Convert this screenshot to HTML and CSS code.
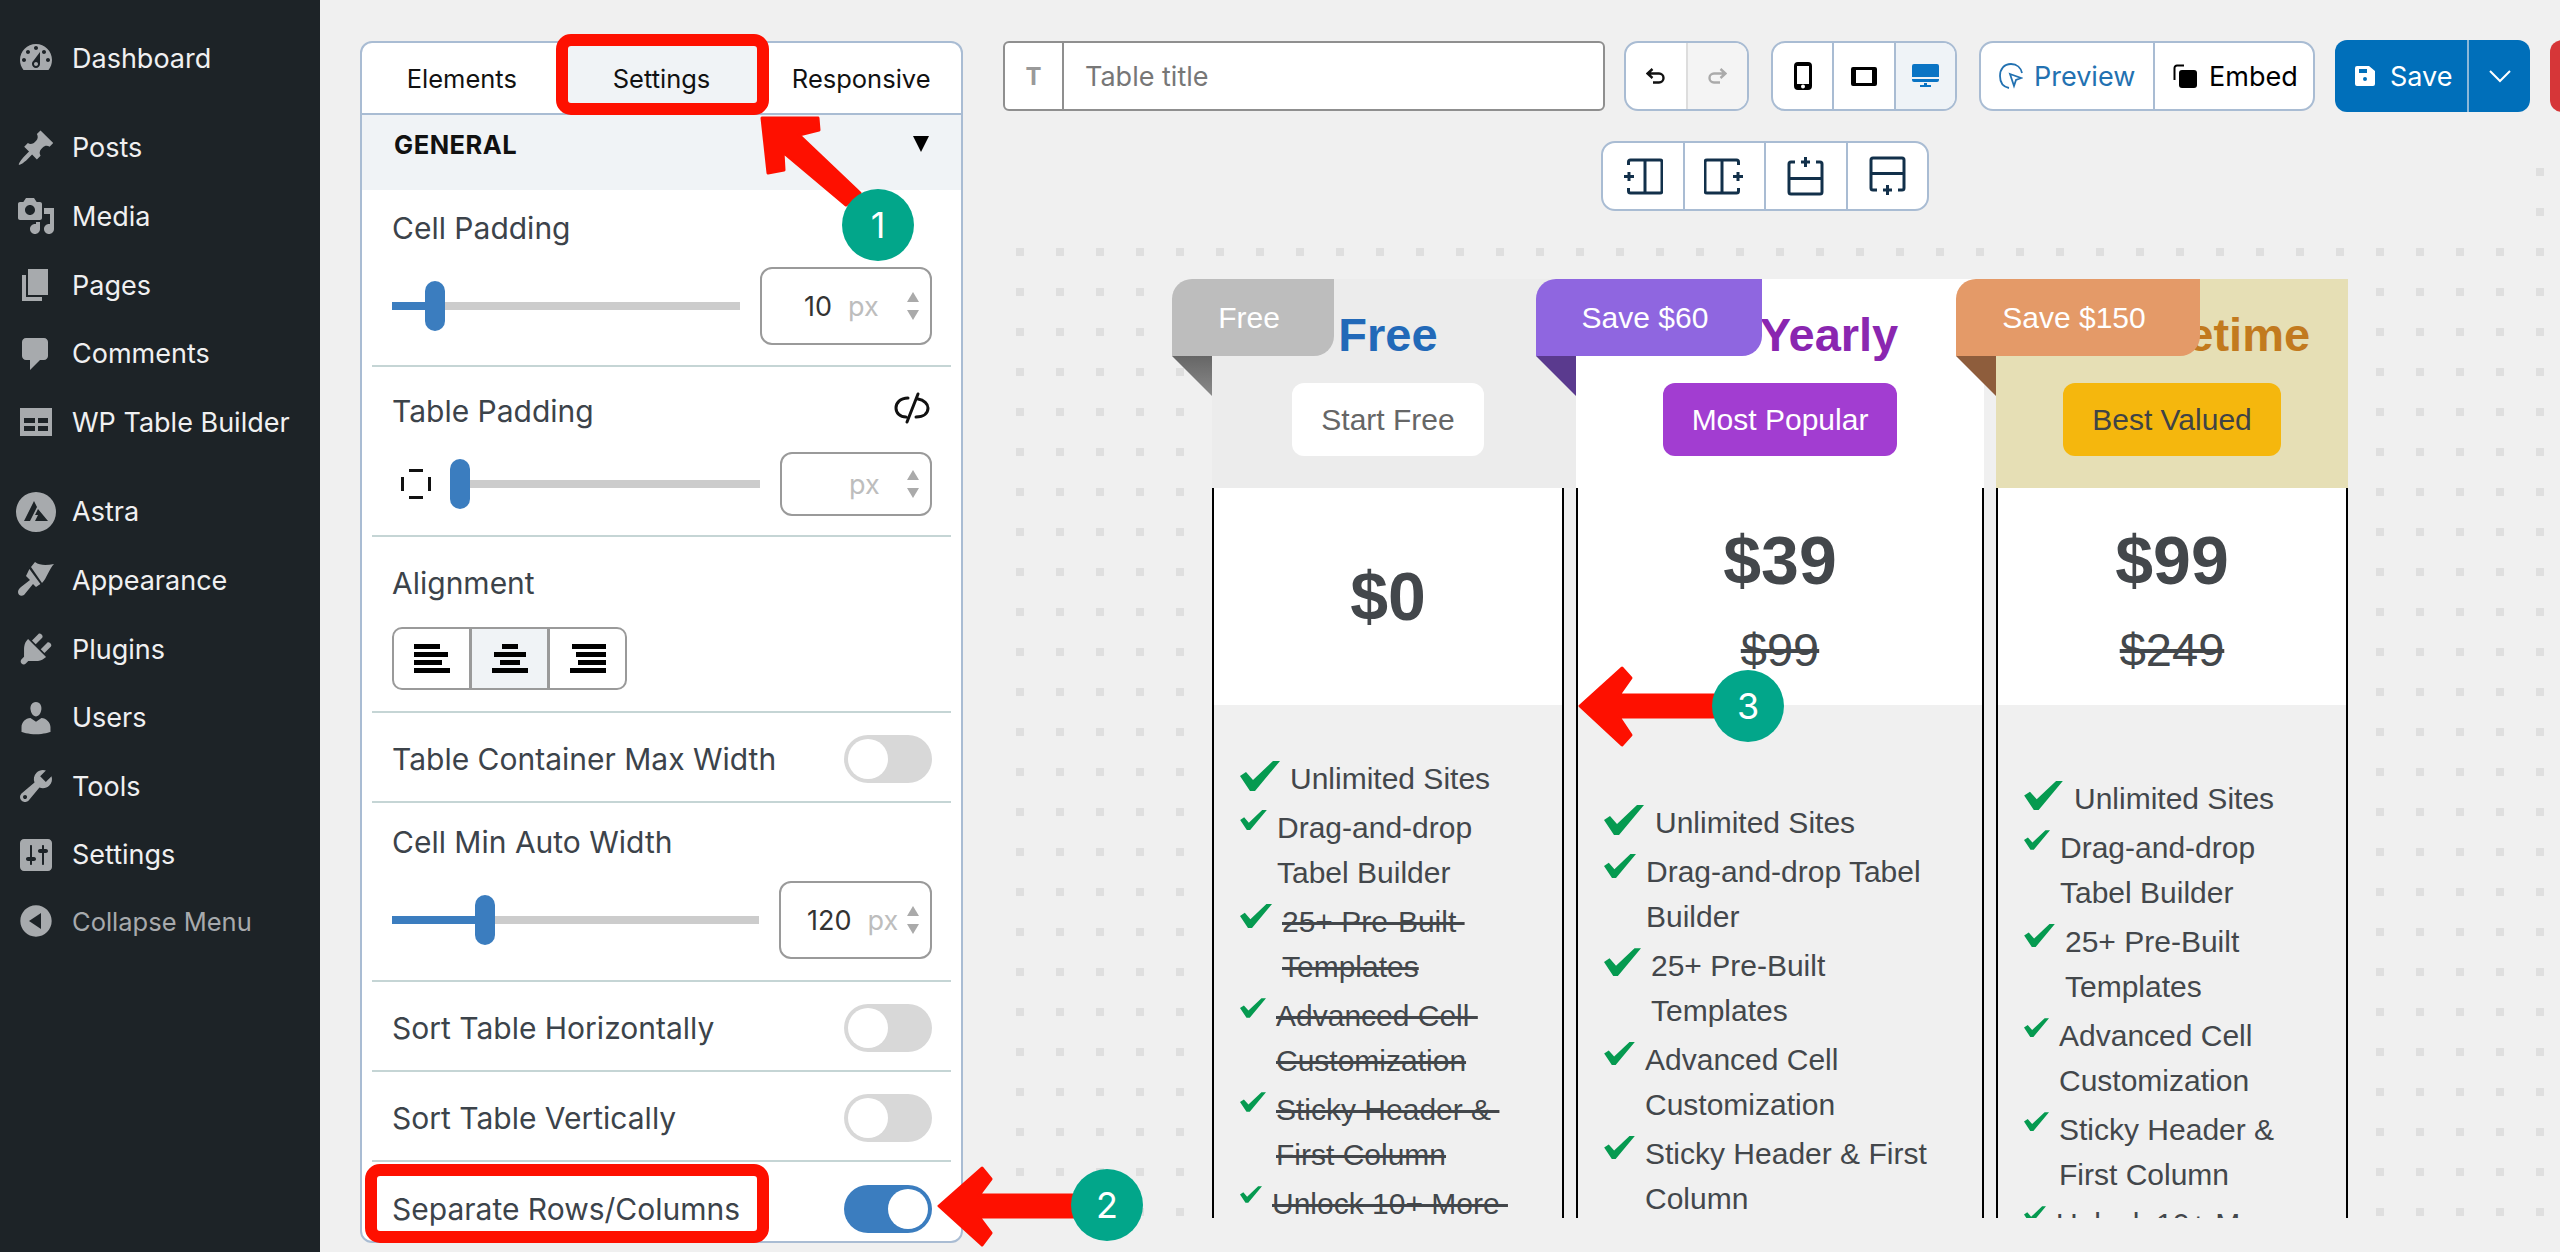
FILE: index.html
```html
<!DOCTYPE html>
<html lang="en">
<head>
    <meta charset="UTF-8">
    <title>WP Table Builder</title>
    <link rel="stylesheet" href="styles.css">
</head>
<body>
    <aside class="sidebar">
        <ul class="menu">
            <li class="menu-item menu-gap"><svg class="menu-icon" viewBox="0 0 20 20"><path fill-rule="evenodd" d="M3.76 16h12.48c1.1-1.37 1.76-3.11 1.76-5 0-4.42-3.58-8-8-8s-8 3.58-8 8c0 1.89.66 3.63 1.76 5zM10 4c.55 0 1 .45 1 1s-.45 1-1 1-1-.45-1-1 .45-1 1-1zM6 6c.55 0 1 .45 1 1s-.45 1-1 1-1-.45-1-1 .45-1 1-1zm8 0c.55 0 1 .45 1 1s-.45 1-1 1-1-.45-1-1 .45-1 1-1zm-5.37 5.550L12 7v6c0 1.100-.9 2-2 2s-2-.9-2-2c0-.57.24-1.080.63-1.450zM4 10c.55 0 1 .45 1 1s-.45 1-1 1-1-.45-1-1 .45-1 1-1zm12 0c.55 0 1 .45 1 1s-.45 1-1 1-1-.45-1-1 .45-1 1-1zm-5 3c0-.55-.45-1-1-1s-1 .45-1 1 .45 1 1 1 1-.45 1-1z"/></svg>Dashboard</li>
            <li class="menu-item"><svg class="menu-icon" viewBox="0 0 20 20"><path d="M10.440 3.020l1.820-1.820 6.360 6.350-1.830 1.820c-1.050-.68-2.480-.57-3.410.36l-.75.75c-.92.93-1.040 2.350-.35 3.410l-1.830 1.820-2.410-2.410-2.800 2.790c-.42.42-3.380 2.710-3.800 2.290s1.860-3.390 2.280-3.810l2.790-2.790L4.100 9.360l1.830-1.820c1.050.69 2.480.57 3.400-.36l.75-.75c.93-.92 1.050-2.350.36-3.410z"/></svg>Posts</li>
            <li class="menu-item"><svg class="menu-icon" viewBox="0 0 20 20"><path fill-rule="evenodd" d="M13 11V4c0-.55-.45-1-1-1h-1.670L9 1H5L3.670 3H2c-.55 0-1 .45-1 1v7c0 .55.45 1 1 1h10c.55 0 1-.45 1-1zM7 4.500c1.380 0 2.500 1.120 2.500 2.500S8.380 9.500 7 9.500 4.500 8.380 4.500 7 5.620 4.500 7 4.500zM14 6h5v10.500c0 1.380-1.120 2.500-2.500 2.500S14 17.880 14 16.500s1.120-2.500 2.500-2.500c.17 0 .34.02.5.05V9h-3V6zm-4 8.050V13h2v3.500c0 1.380-1.120 2.500-2.500 2.500S7 17.880 7 16.500 8.120 14 9.500 14c.17 0 .34.02.5.05z"/></svg>Media</li>
            <li class="menu-item"><svg class="menu-icon" viewBox="0 0 20 20"><path d="M6 15V2h10v13H6zm-1 1h8v2H3V5h2v11z"/></svg>Pages</li>
            <li class="menu-item"><svg class="menu-icon" viewBox="0 0 20 20"><path d="M5 2h9c1.100 0 2 .9 2 2v7c0 1.100-.9 2-2 2h-2l-5 5v-5H5c-1.100 0-2-.9-2-2V4c0-1.100.9-2 2-2z"/></svg>Comments</li>
            <li class="menu-item menu-gap"><svg class="menu-icon" viewBox="0 0 40 40"><path fill-rule="evenodd" d="M4 6h32v28H4zM8 16v5h11v-5zM22 16v5h10v-5zM8 24v5h11v-5zM22 24v5h10v-5z"/></svg>WP Table Builder</li>
            <li class="menu-item"><svg class="menu-icon" viewBox="0 0 40 40"><path fill-rule="evenodd" d="M20 0a20 20 0 1 1 0 40a20 20 0 0 1 0-40zM18 9L8 29h6l7-14zM22 17l-3 6h3l-3 6h13z"/></svg>Astra</li>
            <li class="menu-item"><svg class="menu-icon" viewBox="0 0 20 20"><path d="M7.500 3.500L9.500 1C12 2.800 15 2.800 19 2c-2.500 2.500-3.500 7-6 9.500zM6.700 4.500l5.500 7.500-2.200 1.500L8.500 12 4 17.500c-1.500 1-3 0-3-1.500 0-1 .5-1.500 1.500-2.500L7 10 5 8z"/></svg>Appearance</li>
            <li class="menu-item"><svg class="menu-icon" viewBox="0 0 20 20"><path d="M13.110 4.360L9.870 7.600 8 5.730l3.240-3.240c.35-.34 1.050-.2 1.560.32.52.51.66 1.210.31 1.550zm-8 1.770l.91-1.120 9.010 9.010-1.190.84c-.71.71-2.630 1.160-3.820 1.160H6.140L4.900 17.260c-.59.59-1.540.59-2.120 0-.59-.58-.59-1.530 0-2.120l1.240-1.240v-3.880c0-1.130.4-3.190 1.090-3.890zm7.260 3.970l3.240-3.240c.34-.35 1.040-.21 1.550.31.52.51.66 1.210.31 1.550l-3.240 3.250z"/></svg>Plugins</li>
            <li class="menu-item"><svg class="menu-icon" viewBox="0 0 20 20"><path d="M10 9.250c-2.270 0-2.730-3.440-2.730-3.440C7 4.020 7.820 2 9.970 2c2.160 0 2.980 2.020 2.710 3.810 0 0-.41 3.440-2.680 3.440zm0 2.570L12.720 10c2.390 0 4.520 2.330 4.520 4.530v2.490s-3.650 1.130-7.240 1.130c-3.650 0-7.240-1.130-7.240-1.130v-2.490c0-2.250 1.940-4.480 4.470-4.480z"/></svg>Users</li>
            <li class="menu-item"><svg class="menu-icon" viewBox="0 0 20 20"><path fill-rule="evenodd" d="M16.680 9.770c-1.340 1.340-3.300 1.670-4.950.99l-5.410 6.520c-.99.99-2.590.99-3.580 0s-.99-2.590 0-3.570l6.520-5.420c-.68-1.650-.35-3.610.99-4.950 1.280-1.280 3.120-1.620 4.720-1.060l-2.890 2.890 2.820 2.820 2.860-2.870c.53 1.580.18 3.390-1.080 4.650zM3.810 16.210c.4.39 1.040.39 1.430 0 .4-.4.4-1.040 0-1.430-.39-.4-1.030-.4-1.430 0-.39.39-.39 1.030 0 1.430z"/></svg>Tools</li>
            <li class="menu-item"><svg class="menu-icon" viewBox="0 0 20 20"><path fill-rule="evenodd" d="M18 16V4c0-1.100-.9-2-2-2H4c-1.100 0-2 .9-2 2v12c0 1.100.9 2 2 2h12c1.100 0 2-.9 2-2zM8 11h1c.55 0 1 .45 1 1s-.45 1-1 1H8v1.500c0 .28-.22.5-.5.5s-.5-.22-.5-.5V13H6c-.55 0-1-.45-1-1s.45-1 1-1h1V5.500c0-.28.22-.5.5-.5s.5.22.5.5V11zm5-2h-1c-.55 0-1-.45-1-1s.45-1 1-1h1V5.500c0-.28.22-.5.5-.5s.5.22.5.5V7h1c.55 0 1 .45 1 1s-.45 1-1 1h-1v5.500c0 .28-.22.5-.5.5s-.5-.22-.5-.5V9z"/></svg>Settings</li>
            <li class="menu-item menu-collapse"><svg class="menu-icon" viewBox="0 0 20 20"><path fill-rule="evenodd" d="M10 2.160c4.330 0 7.840 3.510 7.840 7.840s-3.510 7.840-7.840 7.840S2.160 14.330 2.160 10 5.670 2.160 10 2.160zM12.500 14V6l-6 4z"/></svg>Collapse Menu</li>
        </ul>
    </aside>

    <main class="main">
        <section class="panel">
            <div class="tabs">
                <div class="tab">Elements</div>
                <div class="tab tab-active">Settings</div>
                <div class="tab">Responsive</div>
            </div>
            <div class="group-head">
                <span>GENERAL</span>
                <svg width="18" height="16" viewBox="0 0 18 16"><polygon points="1,0 17,0 9,16"/></svg>
            </div>

            <div class="setting setting-cell">
                <div class="label">Cell Padding</div>
                <div class="slider-row">
                    <div class="track"><div class="fill" style="width: 33px"></div><div class="handle"></div><div class="rest"></div></div>
                    <div class="num num-big"><span class="num-value">10</span><span class="unit">px</span><span class="spin"><i class="up"></i><i class="down"></i></span></div>
                </div>
            </div>

            <div class="setting setting-table">
                <div class="label-row">
                    <div class="label">Table Padding</div>
                    <svg width="36" height="32" viewBox="0 0 36 32" fill="none" stroke="#111" stroke-width="3" stroke-linecap="round"><path d="M14 6C6 6 2 11 2 16c0 5 4 9 10 9M24 7c6 1 10 5 10 9 0 5-4 9-12 9M24 2L13 30"/></svg>
                </div>
                <div class="slider-row">
                    <svg class="padding-icon" width="30" height="30" viewBox="0 0 30 30" stroke="#111" stroke-width="3"><path d="M8 1.500H22M8 28.500H22M1.500 8V22M28.500 8V22"/></svg>
                    <div class="track"><div class="handle"></div><div class="rest"></div></div>
                    <div class="num num-short"><span class="unit">px</span><span class="spin"><i class="up"></i><i class="down"></i></span></div>
                </div>
            </div>

            <div class="setting setting-align">
                <div class="label">Alignment</div>
                <div class="align-group">
                    <div class="align-btn"><svg width="36" height="30" viewBox="0 0 36 30"><path d="M0 0h26v5H0zM0 8h34v5H0zM0 16h28v5H0zM0 24h36v5H0z"/></svg></div>
                    <div class="align-btn align-on"><svg width="36" height="30" viewBox="0 0 36 30"><path d="M10 0h16v5H10zM2 8h32v5H2zM8 16h20v5H8zM0 24h36v5H0z"/></svg></div>
                    <div class="align-btn"><svg width="36" height="30" viewBox="0 0 36 30"><path d="M2 0h34v5H2zM6 8h30v5H6zM8 16h28v5H8zM0 24h36v5H0z"/></svg></div>
                </div>
            </div>

            <div class="setting setting-toggle">
                <div class="label">Table Container Max Width</div>
                <div class="toggle"><div class="knob"></div></div>
            </div>

            <div class="setting setting-min">
                <div class="label">Cell Min Auto Width</div>
                <div class="slider-row">
                    <div class="track"><div class="fill" style="width: 83px"></div><div class="handle handle-short"></div><div class="rest"></div></div>
                    <div class="num num-mid"><span class="num-value">120</span><span class="unit">px</span><span class="spin"><i class="up"></i><i class="down"></i></span></div>
                </div>
            </div>

            <div class="setting setting-toggle">
                <div class="label">Sort Table Horizontally</div>
                <div class="toggle"><div class="knob"></div></div>
            </div>

            <div class="setting setting-toggle">
                <div class="label">Sort Table Vertically</div>
                <div class="toggle"><div class="knob"></div></div>
            </div>

            <div class="setting setting-toggle setting-last">
                <div class="label">Separate Rows/Columns</div>
                <div class="toggle toggle-on"><div class="knob"></div></div>
            </div>
        </section>

        <section class="workspace">
            <div class="toolbar">
                <div class="title-field">
                    <span class="title-t">T</span>
                    <span class="title-text">Table title</span>
                </div>
                <div class="btn-group group-undo">
                    <div class="tool tool-undo"><svg width="20" height="16" viewBox="0 0 20 16" fill="none" stroke="#111" stroke-width="2.400"><path d="M6.500 1L1.500 5.500l5 4.500M1.500 5.500H13a4.500 4.500 0 0 1 0 9H7"/></svg></div>
                    <div class="tool tool-redo"><svg width="20" height="16" viewBox="0 0 20 16" fill="none" stroke="#aaa" stroke-width="2.400"><path d="M13.500 1l5 4.500-5 4.500M18.500 5.500H7a4.500 4.500 0 0 0 0 9h6"/></svg></div>
                </div>
                <div class="btn-group group-device">
                    <div class="tool"><svg width="18" height="28" viewBox="0 0 18 28"><path fill-rule="evenodd" d="M4 0h10a4 4 0 0 1 4 4v20a4 4 0 0 1-4 4H4a4 4 0 0 1-4-4V4a4 4 0 0 1 4-4zM3 4v18h12V4zM7 24.500a2 2 0 1 0 4 0a2 2 0 1 0-4 0z"/></svg></div>
                    <div class="tool"><svg width="26" height="19" viewBox="0 0 26 19"><path fill-rule="evenodd" d="M2 0h22a2 2 0 0 1 2 2v15a2 2 0 0 1-2 2H2a2 2 0 0 1-2-2V2a2 2 0 0 1 2-2zM5 3v13h16V3z"/></svg></div>
                    <div class="tool tool-on"><svg width="27" height="24" viewBox="0 0 27 24" fill="#0a74c4"><path d="M2 0h23a2 2 0 0 1 2 2v11H0V2a2 2 0 0 1 2-2zM0 15h27v1a2 2 0 0 1-2 2H2a2 2 0 0 1-2-2zM12 19h3v2h4v2H8v-2h4z"/></svg></div>
                </div>
                <div class="btn-group group-share">
                    <div class="share share-preview">
                        <svg width="24" height="26" viewBox="0 0 24 26" fill="none" stroke="#2271b1" stroke-width="1.800"><path d="M10 25C5 24 1 20 1 13 1 6 5 1 12 1c6 0 10 4 11 9"/><path d="M11 11l11 4-5 2-2 6z"/></svg>
                        Preview
                    </div>
                    <div class="share share-embed">
                        <svg width="24" height="24" viewBox="0 0 24 24"><path fill="none" stroke="#000" stroke-width="2" d="M11 1.500H4A2.500 2.500 0 0 0 1.500 4v12"/><rect x="6" y="6" width="18" height="18" rx="3"/></svg>
                        Embed
                    </div>
                </div>
                <div class="save-btn">
                    <div class="save-main">
                        <svg width="20" height="20" viewBox="0 0 20 20" fill="#fff"><path fill-rule="evenodd" d="M2 0h12l6 5v13a2 2 0 0 1-2 2H2a2 2 0 0 1-2-2V2a2 2 0 0 1 2-2zM4 3v4h8V3zM8 13a2 2 0 1 0 4 0a2 2 0 1 0-4 0z"/></svg>
                        Save
                    </div>
                    <div class="save-more"><svg width="22" height="13" viewBox="0 0 22 13" fill="none" stroke="#fff" stroke-width="2"><path d="M1 1l10 10L21 1"/></svg></div>
                </div>
                <div class="red-btn"></div>
            </div>

            <div class="btn-group add-group">
                <div class="tool"><svg width="40" height="37" viewBox="0 0 40 37" fill="none"><path d="M5.500 7V4a2 2 0 0 1 2-2H37a2 2 0 0 1 2 2v29a2 2 0 0 1-2 2H7.500a2 2 0 0 1-2-2v-3M22 2v33M1 18.500h10M6 14v9"/></svg></div>
                <div class="tool"><svg class="flip-x" width="40" height="37" viewBox="0 0 40 37" fill="none"><path d="M5.500 7V4a2 2 0 0 1 2-2H37a2 2 0 0 1 2 2v29a2 2 0 0 1-2 2H7.500a2 2 0 0 1-2-2v-3M22 2v33M1 18.500h10M6 14v9"/></svg></div>
                <div class="tool"><svg width="37" height="40" viewBox="0 0 37 40" fill="none"><path d="M8 6H4a2 2 0 0 0-2 2v28a2 2 0 0 0 2 2h29a2 2 0 0 0 2-2V8a2 2 0 0 0-2-2h-4M2 22.500h33M18.500 1v10M14 6h9"/></svg></div>
                <div class="tool"><svg class="flip-y" width="37" height="40" viewBox="0 0 37 40" fill="none"><path d="M8 6H4a2 2 0 0 0-2 2v28a2 2 0 0 0 2 2h29a2 2 0 0 0 2-2V8a2 2 0 0 0-2-2h-4M2 22.500h33M18.500 1v10M14 6h9"/></svg></div>
            </div>

            <div class="canvas">
                <div class="price-table">

                    <div class="col col-free">
                        <div class="ribbon">Free</div>
                        <div class="fold"></div>
                        <div class="col-head">
                            <div class="plan-title">Free</div>
                            <div class="plan-btn">Start Free</div>
                        </div>
                        <div class="col-body">
                            <div class="price"><div class="price-main">$0</div></div>
                            <ul class="features">
                                <li><svg class="check" width="40" height="30" viewBox="0 0 40 30"><path d="M0 15l6-4 7 8L33 0h7L15 30h-5z"/></svg><span>Unlimited Sites</span></li>
                                <li><svg class="check" width="27" height="20" viewBox="0 0 40 30"><path d="M0 15l6-4 7 8L33 0h7L15 30h-5z"/></svg><span>Drag-and-drop<br>Tabel Builder</span></li>
                                <li><svg class="check" width="32" height="24" viewBox="0 0 40 30"><path d="M0 15l6-4 7 8L33 0h7L15 30h-5z"/></svg><s>25+ Pre-Built&nbsp;<br>Templates</s></li>
                                <li><svg class="check" width="26" height="20" viewBox="0 0 40 30"><path d="M0 15l6-4 7 8L33 0h7L15 30h-5z"/></svg><s>Advanced Cell&nbsp;<br>Customization</s></li>
                                <li><svg class="check" width="26" height="20" viewBox="0 0 40 30"><path d="M0 15l6-4 7 8L33 0h7L15 30h-5z"/></svg><s>Sticky Header &amp;&nbsp;<br>First Column</s></li>
                                <li><svg class="check" width="22" height="17" viewBox="0 0 40 30"><path d="M0 15l6-4 7 8L33 0h7L15 30h-5z"/></svg><s>Unlock 10+ More&nbsp;</s></li>
                            </ul>
                        </div>
                    </div>

                    <div class="col col-year">
                        <div class="ribbon">Save $60</div>
                        <div class="fold"></div>
                        <div class="col-head">
                            <div class="plan-title">Yearly</div>
                            <div class="plan-btn">Most Popular</div>
                        </div>
                        <div class="col-body">
                            <div class="price"><div class="price-main">$39</div><div class="price-old">$99</div></div>
                            <ul class="features">
                                <li><svg class="check" width="40" height="30" viewBox="0 0 40 30"><path d="M0 15l6-4 7 8L33 0h7L15 30h-5z"/></svg><span class="gap-11">Unlimited Sites</span></li>
                                <li><svg class="check" width="32" height="24" viewBox="0 0 40 30"><path d="M0 15l6-4 7 8L33 0h7L15 30h-5z"/></svg><span>Drag-and-drop Tabel<br>Builder</span></li>
                                <li><svg class="check" width="37" height="28" viewBox="0 0 40 30"><path d="M0 15l6-4 7 8L33 0h7L15 30h-5z"/></svg><span>25+ Pre-Built<br>Templates</span></li>
                                <li><svg class="check" width="31" height="23" viewBox="0 0 40 30"><path d="M0 15l6-4 7 8L33 0h7L15 30h-5z"/></svg><span>Advanced Cell<br>Customization</span></li>
                                <li><svg class="check" width="31" height="23" viewBox="0 0 40 30"><path d="M0 15l6-4 7 8L33 0h7L15 30h-5z"/></svg><span>Sticky Header &amp; First<br>Column</span></li>
                            </ul>
                        </div>
                    </div>

                    <div class="col col-life">
                        <div class="ribbon">Save $150</div>
                        <div class="fold"></div>
                        <div class="col-head">
                            <div class="plan-title">Lifetime</div>
                            <div class="plan-btn">Best Valued</div>
                        </div>
                        <div class="col-body">
                            <div class="price"><div class="price-main">$99</div><div class="price-old">$249</div></div>
                            <ul class="features">
                                <li><svg class="check" width="39" height="29" viewBox="0 0 40 30"><path d="M0 15l6-4 7 8L33 0h7L15 30h-5z"/></svg><span class="gap-11">Unlimited Sites</span></li>
                                <li><svg class="check" width="26" height="20" viewBox="0 0 40 30"><path d="M0 15l6-4 7 8L33 0h7L15 30h-5z"/></svg><span>Drag-and-drop<br>Tabel Builder</span></li>
                                <li><svg class="check" width="31" height="23" viewBox="0 0 40 30"><path d="M0 15l6-4 7 8L33 0h7L15 30h-5z"/></svg><span>25+ Pre-Built<br>Templates</span></li>
                                <li><svg class="check" width="25" height="19" viewBox="0 0 40 30"><path d="M0 15l6-4 7 8L33 0h7L15 30h-5z"/></svg><span>Advanced Cell<br>Customization</span></li>
                                <li><svg class="check" width="25" height="19" viewBox="0 0 40 30"><path d="M0 15l6-4 7 8L33 0h7L15 30h-5z"/></svg><span>Sticky Header &amp;<br>First Column</span></li>
                                <li><svg class="check" width="22" height="17" viewBox="0 0 40 30"><path d="M0 15l6-4 7 8L33 0h7L15 30h-5z"/></svg><span>Unlock 10+ More</span></li>
                            </ul>
                        </div>
                    </div>

                </div>
            </div>
        </section>
    </main>

    <!-- red markup drawn over the screenshot -->
    <svg class="marks" width="2560" height="1252" viewBox="0 0 2560 1252">
        <rect class="mark-box" x="562" y="40" width="201" height="69" rx="9"/>
        <rect class="mark-box" x="371" y="1170" width="392" height="67" rx="9"/>
        <polygon class="mark-arrow" points="762,118 818,118 819,130 799,135 860,193 846,205 783,152 784,170 768,173"/>
        <polygon class="mark-arrow" points="939,1206 982,1168 991,1179 979,1195 1080,1195 1080,1217 979,1217 991,1233 982,1245"/>
        <polygon class="mark-arrow" points="1580,706 1622,668 1631,678 1619,695 1720,695 1720,717 1619,717 1631,735 1622,745"/>
    </svg>
    <div class="badge badge-one">1</div>
    <div class="badge badge-two">2</div>
    <div class="badge badge-three">3</div>
    <div class="stray-dots"></div>
</body>
</html>
```

FILE: styles.css
```css
* {
    box-sizing: border-box;
}

body {
    position: relative;
    display: flex;
    width: 2560px;
    height: 1252px;
    margin: 0;
    overflow: hidden;
    background-color: #f0f0f0;
    font-family: Inter, "Liberation Sans", sans-serif;
    color: #3c434a;
}

/* sidebar */

.sidebar {
    flex: 0 0 320px;
    padding-top: 24px;
    background-color: #1d2327;
}

.menu {
    margin: 0;
    padding: 0;
    list-style: none;
}

.menu-item {
    display: flex;
    align-items: center;
    height: 68.6px;
    padding-left: 16px;
    font-size: 27px;
    color: #f0f0f1;
}

.menu-gap {
    margin-bottom: 21px;
}

.menu-collapse {
    margin-top: -2px;
    color: #a7aaad;
    font-size: 25.5px;
}

.menu-icon {
    flex: none;
    width: 40px;
    height: 40px;
    margin-right: 16px;
    fill: #a7aaad;
}

/* main */

.main {
    display: flex;
    flex: 1;
    gap: 40px;
    padding: 41px 0 9px 40px;
}

.panel {
    flex: 0 0 603px;
    height: 1202px;
    overflow: hidden;
    background-color: #fff;
    border: 2px solid #a9bcd3;
    border-radius: 12px;
}

.tabs {
    display: flex;
    height: 72px;
    border-bottom: 2px solid #a9bcd3;
}

.tab {
    display: flex;
    flex: 1;
    align-items: center;
    justify-content: center;
    font-size: 25.5px;
    color: #111;
}

.tab-active {
    background-color: #f0f3f6;
}

.group-head {
    display: flex;
    align-items: flex-start;
    justify-content: space-between;
    height: 75px;
    padding: 14px 31px 0 32px;
    background-color: #f0f3f6;
    font-size: 25.5px;
    font-weight: 700;
    letter-spacing: 0.5px;
    color: #111;
}

.group-head svg {
    margin-top: 7px;
}

.setting {
    margin: 0 10px;
    padding: 0 19px 0 20px;
    border-bottom: 2px solid #c5d5d5;
}

.label {
    font-size: 30px;
    line-height: 38px;
}

.label-row {
    display: flex;
    align-items: flex-start;
    justify-content: space-between;
    padding-right: 2px;
}

.setting-cell {
    height: 177px;
    padding-top: 19px;
}

.setting-table {
    height: 170px;
    padding-top: 25px;
}

.setting-align {
    height: 176px;
    padding-top: 27px;
}

.setting-min {
    height: 179px;
    padding-top: 20px;
}

.setting-toggle {
    display: flex;
    align-items: center;
    justify-content: space-between;
    height: 90px;
    padding-top: 3px;
}

.setting-last {
    border-bottom: 0;
}

.setting-cell .slider-row,
.setting-min .slider-row {
    margin-top: 20px;
    height: 78px;
}

.setting-table .slider-row {
    margin-top: 22px;
    height: 64px;
}

.slider-row {
    display: flex;
    align-items: center;
    gap: 20px;
}

.padding-icon {
    flex: none;
    margin-left: 9px;
    margin-right: -1px;
}

.track {
    display: flex;
    flex: 1;
    align-items: center;
}

.fill {
    flex: none;
    height: 8px;
    background-color: #3b7dbf;
}

.rest {
    flex: 1;
    height: 8px;
    background-color: #cccccc;
}

.handle {
    flex: none;
    width: 20px;
    height: 50px;
    background-color: #3b7dbf;
    border-radius: 10px;
}

.num {
    display: flex;
    flex: none;
    align-items: center;
    height: 100%;
    padding-right: 11px;
    background-color: #fff;
    border: 2px solid #9a9a9a;
    border-radius: 12px;
    font-size: 27px;
    color: #333;
}

.num-big {
    width: 172px;
    padding-left: 42px;
}

.num-short {
    width: 152px;
    padding-left: 67px;
}

.num-mid {
    width: 153px;
    padding-left: 26px;
}

.num-value {
    margin-right: 16px;
}

.unit {
    color: #bdbdbd;
}

.spin {
    display: flex;
    flex-direction: column;
    gap: 8px;
    margin-left: auto;
}

.spin i {
    display: block;
    width: 0;
    height: 0;
    border-left: 6px solid transparent;
    border-right: 6px solid transparent;
}

.spin .up {
    border-bottom: 10px solid #aaa;
}

.spin .down {
    border-top: 10px solid #aaa;
}

.align-group {
    display: flex;
    width: 235px;
    height: 63px;
    margin-top: 25px;
    overflow: hidden;
    border: 2px solid #9a9a9a;
    border-radius: 10px;
}

.align-btn {
    display: flex;
    flex: 1;
    align-items: center;
    justify-content: center;
}

.align-on {
    background-color: #f0f3f6;
    border-left: 3px solid #9a9a9a;
    border-right: 3px solid #9a9a9a;
}

.toggle {
    display: flex;
    align-items: center;
    width: 88px;
    height: 48px;
    padding: 0 4px;
    background-color: #d8d8d8;
    border-radius: 24px;
}

.toggle-on {
    justify-content: flex-end;
    background-color: #3b7dbf;
}

.knob {
    width: 40px;
    height: 40px;
    background-color: #fff;
    border-radius: 50%;
}

/* toolbars */

.workspace {
    display: flex;
    flex: 1;
    flex-direction: column;
    min-width: 0;
}

.toolbar {
    display: flex;
    align-items: center;
    height: 70px;
}

.title-field {
    display: flex;
    flex: 0 0 602px;
    align-items: center;
    height: 70px;
    background-color: #fff;
    border: 2px solid #8f8f8f;
    border-radius: 6px;
}

.title-t {
    display: flex;
    flex: 0 0 59px;
    align-items: center;
    justify-content: center;
    height: 100%;
    border-right: 2px solid #8f8f8f;
    font-size: 24px;
    font-weight: 700;
    color: #999;
}

.title-text {
    padding-left: 21px;
    font-size: 27px;
    color: #777;
}

.btn-group {
    display: flex;
    flex: none;
    height: 70px;
    overflow: hidden;
    background-color: #fff;
    border: 2px solid #a9bcd3;
    border-radius: 14px;
}

.tool {
    display: flex;
    flex: 1;
    align-items: center;
    justify-content: center;
}

.tool + .tool {
    border-left: 2px solid #a9bcd3;
}

.group-undo {
    width: 125px;
    margin-left: 19px;
}

.tool-redo {
    background-color: #f4f4f4;
}

.group-undo .tool + .tool {
    border-left-color: #ddd;
}

.group-device {
    width: 186px;
    margin-left: 22px;
}

.tool-on {
    background-color: #eff3f7;
}

.group-share {
    width: 336px;
    margin-left: 22px;
}

.share {
    display: flex;
    align-items: center;
    font-size: 27px;
}

.share-preview {
    flex: 0 0 172px;
    gap: 11px;
    padding-left: 18px;
    color: #2271b1;
}

.share-embed {
    flex: 1;
    gap: 12px;
    padding-left: 18px;
    border-left: 2px solid #a9bcd3;
    color: #000;
}

.save-btn {
    display: flex;
    flex: 0 0 195px;
    height: 72px;
    margin-left: 20px;
    overflow: hidden;
    background-color: #006fba;
    border-radius: 12px;
    font-size: 27px;
    color: #fff;
}

.save-main {
    display: flex;
    flex: 0 0 134px;
    align-items: center;
    gap: 15px;
    padding-left: 20px;
    border-right: 2px solid #8db8d8;
}

.save-more {
    display: flex;
    flex: 1;
    align-items: center;
    justify-content: center;
}

.red-btn {
    flex: none;
    width: 40px;
    height: 72px;
    margin-left: 20px;
    background-color: #d63638;
    border-radius: 12px;
}

.add-group {
    align-self: flex-start;
    width: 328px;
    margin: 30px 0 0 598px;
}

.add-group svg {
    stroke: #12304a;
    stroke-width: 3;
}

.flip-x {
    transform: scaleX(-1);
}

.flip-y {
    transform: scaleY(-1);
}

/* pricing table on the dotted canvas */

.canvas {
    width: 1560px;
    height: 978px;
    margin: 29px 0 0 -3px;
    padding: 39px 0 0 212px;
    overflow: hidden;
    background-color: #f0f0f0;
    background-image: conic-gradient(from 0deg at 8px 8px, transparent 75%, #dfdfdf 0);
    background-position: 16px 8px;
    background-size: 40px 40px;
}

.price-table {
    display: grid;
    grid-template-columns: 352px 408px 352px;
    column-gap: 12px;
    width: 1136px;
    background-color: #f0f0f0;
    font-family: "Liberation Sans", Arial, sans-serif;
    color: #43474b;
}

.col {
    position: relative;
}

.col-head {
    display: flex;
    flex-direction: column;
    align-items: center;
    height: 209px;
    padding-top: 29px;
}

.col-free .col-head {
    margin-right: -12px;
    padding-right: 12px;
    background-color: #ececec;
}

.col-year .col-head {
    background-color: #fff;
}

.col-life .col-head {
    background-color: #e6dfb5;
}

.plan-title {
    font-size: 47px;
    font-weight: 700;
    line-height: 54px;
}

.col-free .plan-title {
    color: #2269b8;
}

.col-year .plan-title {
    padding-left: 98px;
    color: #8a26b0;
}

.col-life .plan-title {
    padding-left: 96px;
    color: #c27a1e;
}

.plan-btn {
    display: flex;
    align-items: center;
    height: 73px;
    margin-top: 21px;
    padding: 0 29px;
    border-radius: 12px;
    font-size: 30px;
}

.col-free .plan-btn {
    background-color: #fff;
    color: #666;
}

.col-year .plan-btn {
    background-color: #a23dd1;
    color: #fff;
}

.col-life .plan-btn {
    background-color: #f5b70d;
    color: #3f4346;
}

.ribbon {
    position: absolute;
    top: 0;
    left: -40px;
    z-index: 2;
    display: flex;
    align-items: center;
    justify-content: center;
    height: 77px;
    padding-right: 8px;
    border-radius: 20px 0 20px 0;
    font-size: 30px;
    color: #fff;
}

.fold {
    position: absolute;
    top: 77px;
    left: -40px;
    z-index: 2;
    width: 40px;
    height: 40px;
    clip-path: polygon(0 0, 100% 0, 100% 100%);
}

.col-free .ribbon {
    width: 162px;
    background-color: #bdbdbd;
}

.col-free .fold {
    background: linear-gradient(#666, #8a8a8a);
}

.col-year .ribbon {
    width: 226px;
    background-color: #8f66e0;
}

.col-year .fold {
    background-color: #5a3a8e;
}

.col-life .ribbon {
    width: 244px;
    background-color: #e49a68;
}

.col-life .fold {
    background-color: #8e5d3c;
}

.col-body {
    height: 730px;
    border-left: 2px solid #000;
    border-right: 2px solid #000;
}

.price {
    display: flex;
    flex-direction: column;
    align-items: center;
    justify-content: center;
    height: 217px;
    background-color: #fff;
}

.price-main {
    font-size: 68px;
    font-weight: 700;
    line-height: 105px;
}

.price-old {
    font-size: 47px;
    line-height: 73px;
    text-decoration: line-through;
}

.features {
    margin: 0;
    padding: 0 0 0 26px;
    list-style: none;
    font-size: 30px;
    line-height: 45px;
}

.col-free .features {
    padding-top: 51px;
}

.col-year .features {
    padding-top: 95px;
}

.col-life .features {
    padding-top: 71px;
}

.features li {
    display: flex;
    align-items: flex-start;
    gap: 10px;
    margin-bottom: 4px;
}

.features .gap-11 {
    margin-left: 1px;
}

.check {
    flex: none;
    margin-top: 5px;
    fill: #059a50;
}

/* annotations on top of everything */

.marks {
    position: absolute;
    top: 0;
    left: 0;
    z-index: 5;
}

.mark-box {
    fill: none;
    stroke: #fe1000;
    stroke-width: 12;
}

.mark-arrow {
    fill: #fe1000;
    stroke: #fe1000;
    stroke-width: 3;
    stroke-linejoin: round;
}

.badge {
    position: absolute;
    z-index: 6;
    display: flex;
    align-items: center;
    justify-content: center;
    width: 72px;
    height: 72px;
    background-color: #02a68a;
    border-radius: 50%;
    font-size: 36px;
    color: #fff;
}

.badge-one {
    top: 189px;
    left: 842px;
}

.badge-two {
    top: 1169px;
    left: 1071px;
}

.badge-three {
    top: 670px;
    left: 1712px;
}

.stray-dots {
    position: absolute;
    top: 168px;
    left: 2536px;
    width: 8px;
    height: 48px;
    background-image: linear-gradient(#dfdfdf 8px, transparent 8px);
    background-size: 8px 40px;
}
```
